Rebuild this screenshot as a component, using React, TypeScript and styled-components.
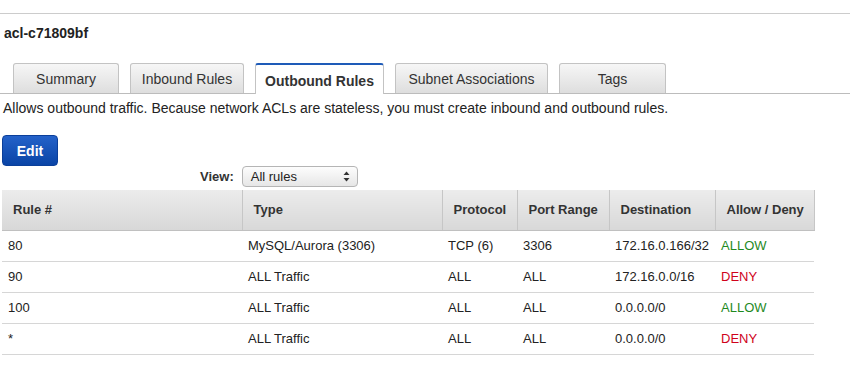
import { createGlobalStyle, styled } from 'styled-components'

// ACL detail panel: outbound rules tab

type Rule = {
  num: string
  type: string
  protocol: string
  port: string
  dest: string
  action: 'ALLOW' | 'DENY'
}

const rules: Rule[] = [
  { num: '80', type: 'MySQL/Aurora (3306)', protocol: 'TCP (6)', port: '3306', dest: '172.16.0.166/32', action: 'ALLOW' },
  { num: '90', type: 'ALL Traffic', protocol: 'ALL', port: 'ALL', dest: '172.16.0.0/16', action: 'DENY' },
  { num: '100', type: 'ALL Traffic', protocol: 'ALL', port: 'ALL', dest: '0.0.0.0/0', action: 'ALLOW' },
  { num: '*', type: 'ALL Traffic', protocol: 'ALL', port: 'ALL', dest: '0.0.0.0/0', action: 'DENY' },
]

const tabs = [
  { label: 'Summary', width: 106 },
  { label: 'Inbound Rules', width: 114 },
  { label: 'Outbound Rules', width: 129, active: true },
  { label: 'Subnet Associations', width: 153 },
  { label: 'Tags', width: 107 },
]

const columns = [
  { label: 'Rule #', width: 240 },
  { label: 'Type', width: 200 },
  { label: 'Protocol', width: 75 },
  { label: 'Port Range', width: 92 },
  { label: 'Destination', width: 106 },
  { label: 'Allow / Deny', width: 99 },
]

const App = () => {
  return (
    <>
      <GlobalStyle />
      <StyledPanel>
        <StyledTitle>acl-c71809bf</StyledTitle>
        <StyledTabBar>
          {tabs.map((tab) => (
            <StyledTab key={tab.label} $active={!!tab.active} $width={tab.width}>
              {tab.label}
            </StyledTab>
          ))}
        </StyledTabBar>
        <StyledDescription>
          Allows outbound traffic. Because network ACLs are stateless, you must create inbound and
          outbound rules.
        </StyledDescription>
        <StyledEditButton>Edit</StyledEditButton>
        <StyledViewRow>
          <StyledViewLabel>View:</StyledViewLabel>
          <StyledSelect>
            <span>All rules</span>
            <svg width="7" height="11" viewBox="0 0 7 11">
              <path d="M3.5 0.5 L6.5 4 L0.5 4 Z" fill="#333" />
              <path d="M3.5 10.5 L6.5 7 L0.5 7 Z" fill="#333" />
            </svg>
          </StyledSelect>
        </StyledViewRow>
        <StyledTable>
          <thead>
            <tr>
              {columns.map((col) => (
                <StyledTh key={col.label} $width={col.width}>
                  {col.label}
                </StyledTh>
              ))}
            </tr>
          </thead>
          <tbody>
            {rules.map((rule) => (
              <tr key={rule.num}>
                <StyledTd>{rule.num}</StyledTd>
                <StyledTd>{rule.type}</StyledTd>
                <StyledTd>{rule.protocol}</StyledTd>
                <StyledTd>{rule.port}</StyledTd>
                <StyledTd>{rule.dest}</StyledTd>
                <StyledAction $allow={rule.action === 'ALLOW'}>{rule.action}</StyledAction>
              </tr>
            ))}
          </tbody>
        </StyledTable>
      </StyledPanel>
    </>
  )
}

export default App

const GlobalStyle = createGlobalStyle`
  body {
    margin: 0;
    background: #fff;
    font-family: "Liberation Sans", Arial, sans-serif;
    color: #333;
  }
`

const StyledPanel = styled.div`
  width: 850px;
  height: 359px;
  margin-top: 13px;
  border-top: 1px solid #cccccc;
  display: flex;
  flex-direction: column;
  overflow: hidden;
`

const StyledTitle = styled.div`
  padding: 11px 0 0 4px;
  height: 38px;
  box-sizing: border-box;
  font-size: 14px;
  font-weight: bold;
  line-height: 16px;
  color: #222;
`

const StyledTabBar = styled.div`
  height: 42px;
  padding: 11px 0 0 13px;
  box-sizing: border-box;
  display: flex;
  align-items: flex-end;
  gap: 11px;
  border-bottom: 1px solid #bcbcbc;
`

const StyledTab = styled.div<{ $active: boolean; $width: number }>`
  width: ${({ $width }) => $width}px;
  height: ${({ $active }) => ($active ? 31 : 30)}px;
  box-sizing: border-box;
  margin-bottom: ${({ $active }) => ($active ? -1 : 0)}px;
  display: flex;
  align-items: center;
  justify-content: center;
  border: 1px solid #c3c3c3;
  border-bottom: none;
  border-top: ${({ $active }) => ($active ? '2px solid #1e5bb8' : '1px solid #c3c3c3')};
  border-radius: 3px 3px 0 0;
  background: ${({ $active }) =>
    $active ? '#ffffff' : 'linear-gradient(#f6f6f6, #dedede)'};
  font-size: 14px;
  font-weight: ${({ $active }) => ($active ? 'bold' : 'normal')};
  padding-top: ${({ $active }) => ($active ? 3 : 0)}px;
  color: #333;
`

const StyledDescription = styled.div`
  padding: 6px 0 0 3px;
  height: 41px;
  box-sizing: border-box;
  font-size: 14px;
  line-height: 17px;
  color: #222;
`

const StyledEditButton = styled.button`
  margin-left: 2px;
  width: 56px;
  height: 31px;
  flex-shrink: 0;
  border: 1px solid #0b3f9a;
  border-radius: 4px;
  background: linear-gradient(#2462c9, #0a44a6);
  color: #fff;
  font-family: "Liberation Sans", Arial, sans-serif;
  font-size: 14px;
  font-weight: bold;
  padding: 0;
`

const StyledViewRow = styled.div`
  height: 21px;
  flex-shrink: 0;
  padding-left: 200px;
  display: flex;
  align-items: center;
  gap: 8px;
`

const StyledViewLabel = styled.span`
  font-size: 13px;
  font-weight: bold;
  line-height: 21px;
  color: #333;
`

const StyledSelect = styled.div`
  width: 116px;
  height: 21px;
  box-sizing: border-box;
  padding: 0 7px 0 8px;
  display: flex;
  align-items: center;
  justify-content: space-between;
  border: 1px solid #b5b5b5;
  border-radius: 4px;
  background: linear-gradient(#fdfdfd, #e6e6e6);
  font-size: 13px;
  color: #222;
`

const StyledTable = styled.table`
  margin: 3px 0 0 2px;
  width: 812px;
  border-collapse: collapse;
  table-layout: fixed;
  font-size: 13px;
`

const StyledTh = styled.th<{ $width: number }>`
  width: ${({ $width }) => $width}px;
  height: 40px;
  padding: 0 0 0 11px;
  box-sizing: border-box;
  text-align: left;
  font-weight: bold;
  color: #333;
  background: linear-gradient(#ececec, #d8d8d8);
  border-left: 1px solid #c6c6c6;
  border-right: 1px solid #c6c6c6;
  border-bottom: 1px solid #c0c0c0;

  &:first-child {
    border-left: none;
  }
`

const StyledTd = styled.td`
  height: 31px;
  padding: 0 0 0 6px;
  box-sizing: border-box;
  color: #222;
  border-bottom: 1px solid #d6d6d6;
  white-space: nowrap;
`

const StyledAction = styled(StyledTd)<{ $allow: boolean }>`
  color: ${({ $allow }) => ($allow ? '#1f8a1f' : '#d0021b')};
`
